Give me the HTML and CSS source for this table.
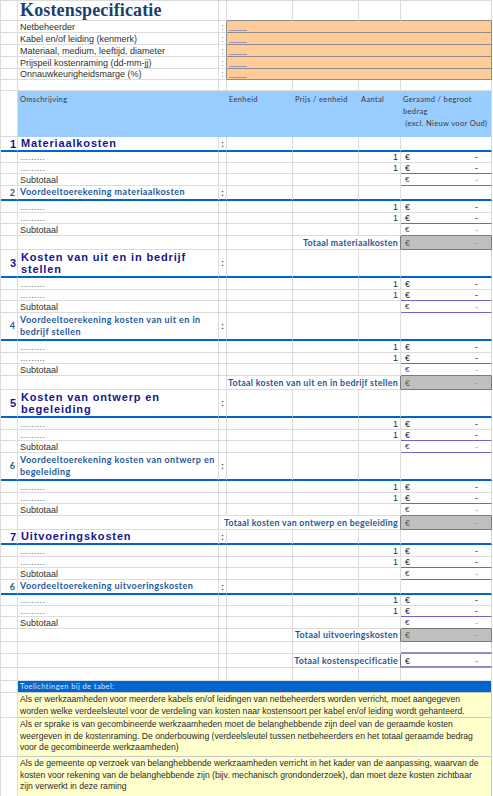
FILE: index.html
```html
<!DOCTYPE html>
<html lang="nl">
<head>
  <meta charset="UTF-8">
  <meta name="viewport" content="width=device-width, initial-scale=1.0">
  <title>Kostenspecificatie</title>
  <link rel="stylesheet" href="styles.css">
</head>
<body>
  <table class="sheet">
    <colgroup>
      <col class="col-a"><col class="col-b"><col class="col-c"><col class="col-d"><col class="col-e"><col class="col-f"><col class="col-g">
    </colgroup>

    <!-- kop + invoervelden -->
    <tr class="h21">
      <td></td><td class="sheet-title">Kostenspecificatie</td><td></td>
      <td class="above-field"></td><td class="above-field"></td><td class="above-field"></td><td class="above-field"></td>
    </tr>
    <tr class="h12"><td></td><td class="label">Netbeheerder</td><td class="colon field-edge">:</td><td class="field" colspan="4"><span class="field-line"></span></td></tr>
    <tr class="h12"><td></td><td class="label">Kabel en/of leiding (kenmerk)</td><td class="colon field-edge">:</td><td class="field" colspan="4"><span class="field-line"></span></td></tr>
    <tr class="h12"><td></td><td class="label">Materiaal, medium, leeftijd, diameter</td><td class="colon field-edge">:</td><td class="field" colspan="4"><span class="field-line"></span></td></tr>
    <tr class="h12"><td></td><td class="label">Prijspeil kostenraming (dd-mm-jj)</td><td class="colon field-edge">:</td><td class="field" colspan="4"><span class="field-line"></span></td></tr>
    <tr class="h11"><td></td><td class="label">Onnauwkeurigheidsmarge (%)</td><td class="colon field-edge">:</td><td class="field" colspan="4"><span class="field-line"></span></td></tr>
    <tr class="h11"><td></td><td></td><td></td><td></td><td></td><td></td><td></td></tr>

    <!-- kolomkoppen -->
    <tr class="head">
      <td class="plain"></td>
      <td colspan="2">Omschrijving</td>
      <td>Eenheid</td>
      <td>Prijs / eenheid</td>
      <td>Aantal</td>
      <td class="last">Geraamd / begroot<br>bedrag<br>&nbsp;(excl. Nieuw voor Oud)</td>
    </tr>

    <!-- 1 -->
    <tr class="section h15"><td class="num">1</td><td class="sec-title">Materiaalkosten</td><td class="colon-b">:</td><td></td><td></td><td></td><td></td></tr>
    <tr class="h11"><td></td><td class="dots">.........</td><td></td><td></td><td></td><td class="qty">1</td><td class="amount"><span>€</span><span class="dash">-</span></td></tr>
    <tr class="h11"><td></td><td class="dots">.........</td><td></td><td></td><td></td><td class="qty">1</td><td class="amount line-under"><span>€</span><span class="dash">-</span></td></tr>
    <tr class="h12"><td></td><td class="label">Subtotaal</td><td></td><td></td><td></td><td></td><td class="amount subtotal line-under"><span>€</span><span class="dash">-</span></td></tr>

    <!-- 2 -->
    <tr class="section h15"><td class="num-sub">2</td><td class="sub-title">Voordeeltoerekening materiaalkosten</td><td class="colon-b">:</td><td></td><td></td><td></td><td></td></tr>
    <tr class="h12"><td></td><td class="dots">.........</td><td></td><td></td><td></td><td class="qty">1</td><td class="amount"><span>€</span><span class="dash">-</span></td></tr>
    <tr class="h11"><td></td><td class="dots">.........</td><td></td><td></td><td></td><td class="qty">1</td><td class="amount line-under"><span>€</span><span class="dash">-</span></td></tr>
    <tr class="h12"><td></td><td class="label">Subtotaal</td><td></td><td></td><td></td><td></td><td class="amount subtotal box-under"><span>€</span><span class="dash">-</span></td></tr>
    <tr class="h14"><td></td><td></td><td></td><td></td><td class="total-label" colspan="2">Totaal materiaalkosten</td><td class="amount total"><span>€</span><span class="dash">-</span></td></tr>

    <!-- 3 -->
    <tr class="section h28"><td class="num">3</td><td class="sec-title">Kosten van uit en in bedrijf<br>stellen</td><td class="colon-b">:</td><td></td><td></td><td></td><td></td></tr>
    <tr class="h12"><td></td><td class="dots">.........</td><td></td><td></td><td></td><td class="qty">1</td><td class="amount"><span>€</span><span class="dash">-</span></td></tr>
    <tr class="h11"><td></td><td class="dots">.........</td><td></td><td></td><td></td><td class="qty">1</td><td class="amount line-under"><span>€</span><span class="dash">-</span></td></tr>
    <tr class="h12"><td></td><td class="label">Subtotaal</td><td></td><td></td><td></td><td></td><td class="amount subtotal line-under"><span>€</span><span class="dash">-</span></td></tr>

    <!-- 4 -->
    <tr class="section h28"><td class="num-sub">4</td><td class="sub-title">Voordeeltoerekening kosten van uit en in<br>bedrijf stellen</td><td class="colon-b">:</td><td></td><td></td><td></td><td></td></tr>
    <tr class="h12"><td></td><td class="dots">.........</td><td></td><td></td><td></td><td class="qty">1</td><td class="amount"><span>€</span><span class="dash">-</span></td></tr>
    <tr class="h11"><td></td><td class="dots">.........</td><td></td><td></td><td></td><td class="qty">1</td><td class="amount line-under"><span>€</span><span class="dash">-</span></td></tr>
    <tr class="h12"><td></td><td class="label">Subtotaal</td><td></td><td></td><td></td><td></td><td class="amount subtotal box-under"><span>€</span><span class="dash">-</span></td></tr>
    <tr class="h14"><td></td><td></td><td></td><td class="total-label" colspan="3">Totaal kosten van uit en in bedrijf stellen</td><td class="amount total"><span>€</span><span class="dash">-</span></td></tr>

    <!-- 5 -->
    <tr class="section h28"><td class="num">5</td><td class="sec-title">Kosten van ontwerp en<br>begeleiding</td><td class="colon-b">:</td><td></td><td></td><td></td><td></td></tr>
    <tr class="h12"><td></td><td class="dots">.........</td><td></td><td></td><td></td><td class="qty">1</td><td class="amount"><span>€</span><span class="dash">-</span></td></tr>
    <tr class="h11"><td></td><td class="dots">.........</td><td></td><td></td><td></td><td class="qty">1</td><td class="amount line-under"><span>€</span><span class="dash">-</span></td></tr>
    <tr class="h12"><td></td><td class="label">Subtotaal</td><td></td><td></td><td></td><td></td><td class="amount subtotal line-under"><span>€</span><span class="dash">-</span></td></tr>

    <!-- 6 -->
    <tr class="section h28"><td class="num-sub">6</td><td class="sub-title">Voordeeltoerekening kosten van ontwerp en<br>begeleiding</td><td class="colon-b">:</td><td></td><td></td><td></td><td></td></tr>
    <tr class="h12"><td></td><td class="dots">.........</td><td></td><td></td><td></td><td class="qty">1</td><td class="amount"><span>€</span><span class="dash">-</span></td></tr>
    <tr class="h11"><td></td><td class="dots">.........</td><td></td><td></td><td></td><td class="qty">1</td><td class="amount line-under"><span>€</span><span class="dash">-</span></td></tr>
    <tr class="h12"><td></td><td class="label">Subtotaal</td><td></td><td></td><td></td><td></td><td class="amount subtotal box-under"><span>€</span><span class="dash">-</span></td></tr>
    <tr class="h14"><td></td><td></td><td class="total-label" colspan="4">Totaal kosten van ontwerp en begeleiding</td><td class="amount total"><span>€</span><span class="dash">-</span></td></tr>

    <!-- 7 -->
    <tr class="section h15"><td class="num">7</td><td class="sec-title">Uitvoeringskosten</td><td class="colon-b">:</td><td></td><td></td><td></td><td></td></tr>
    <tr class="h12"><td></td><td class="dots">.........</td><td></td><td></td><td></td><td class="qty">1</td><td class="amount"><span>€</span><span class="dash">-</span></td></tr>
    <tr class="h11"><td></td><td class="dots">.........</td><td></td><td></td><td></td><td class="qty">1</td><td class="amount line-under"><span>€</span><span class="dash">-</span></td></tr>
    <tr class="h12"><td></td><td class="label">Subtotaal</td><td></td><td></td><td></td><td></td><td class="amount subtotal line-under"><span>€</span><span class="dash">-</span></td></tr>

    <!-- 6 (uitvoering) -->
    <tr class="section h15"><td class="num-sub">6</td><td class="sub-title">Voordeeltoerekening uitvoeringskosten</td><td class="colon-b">:</td><td></td><td></td><td></td><td></td></tr>
    <tr class="h11"><td></td><td class="dots">.........</td><td></td><td></td><td></td><td class="qty">1</td><td class="amount"><span>€</span><span class="dash">-</span></td></tr>
    <tr class="h11"><td></td><td class="dots">.........</td><td></td><td></td><td></td><td class="qty">1</td><td class="amount line-under"><span>€</span><span class="dash">-</span></td></tr>
    <tr class="h12"><td></td><td class="label">Subtotaal</td><td></td><td></td><td></td><td></td><td class="amount subtotal box-under"><span>€</span><span class="dash">-</span></td></tr>
    <tr class="h13"><td></td><td></td><td></td><td></td><td class="total-label" colspan="2">Totaal uitvoeringskosten</td><td class="amount total"><span>€</span><span class="dash">-</span></td></tr>
    <tr class="h12"><td></td><td></td><td></td><td></td><td></td><td></td><td class="grand-line"></td></tr>
    <tr class="h14"><td></td><td></td><td></td><td></td><td class="total-label" colspan="2">Totaal kostenspecificatie</td><td class="amount grand grand-line"><span>€</span><span class="dash">-</span></td></tr>
    <tr class="h13"><td></td><td></td><td></td><td></td><td></td><td></td><td></td></tr>

    <!-- toelichting -->
    <tr class="h12"><td></td><td class="notes-head" colspan="6">Toelichtingen bij de tabel:</td></tr>
    <tr class="h24"><td></td><td class="note" colspan="6">Als er werkzaamheden voor meerdere kabels en/of leidingen van netbeheerders worden verricht, moet aangegeven<br>worden welke verdeelsleutel voor de verdeling van kosten naar kostensoort per kabel en/of leiding wordt gehanteerd.</td></tr>
    <tr class="h39"><td></td><td class="note" colspan="6">Als er sprake is van gecombineerde werkzaamheden moet de belanghebbende zijn deel van de geraamde kosten<br>weergeven in de kostenraming. De onderbouwing (verdeelsleutel tussen netbeheerders en het totaal geraamde bedrag<br>voor de gecombineerde werkzaamheden)</td></tr>
    <tr class="h40"><td></td><td class="note" colspan="6">Als de gemeente op verzoek van belanghebbende werkzaamheden verricht in het kader van de aanpassing, waarvan de<br>kosten voor rekening van de belanghebbende zijn (bijv. mechanisch grondonderzoek), dan moet deze kosten zichtbaar<br>zijn verwerkt in deze raming</td></tr>
  </table>
</body>
</html>
```

FILE: styles.css
```css
:root {
  --grid: #dcdcdc;
  --field-border: #8c8c8c;
  --field-bg: #ffcc99;
  --head-bg: #99ccff;
  --rule-blue: #0066cc;
  --navy: #15168c;
  --steel: #24589a;
  --purple: #6a6ac4;
  --box: #7a7a7a;
  --text: #333;
}

body {
  margin: 0;
  background-color: white;
  font-family: 'Liberation Sans', Arial, sans-serif;
  color: var(--text);
}

.sheet {
  border-collapse: separate;
  border-spacing: 0;
  table-layout: fixed;
  width: 491px;
  border-left: 1px solid var(--grid);
  border-top: 1px solid var(--grid);
}

.col-a { width: 17px; }
.col-b { width: 201px; }
.col-c { width: 8px; }
.col-d { width: 66px; }
.col-e { width: 66px; }
.col-f { width: 42px; }
.col-g { width: 91px; }

td {
  border-right: 1px solid var(--grid);
  border-bottom: 1px solid var(--grid);
  padding: 0 2px;
  font-size: 9px;
  line-height: 10px;
  vertical-align: bottom;
  white-space: nowrap;
  overflow: hidden;
}

.h11 { height: 11px; }
.h12 { height: 12px; }
.h13 { height: 13px; }
.h14 { height: 14px; }
.h15 { height: 15px; }
.h21 { height: 20px; }
.h24 { height: 24px; }
.h28 { height: 28px; }
.h39 { height: 39px; }
.h40 { height: 40px; }

/* titel en invoer */

.sheet-title {
  font-family: 'Liberation Serif', 'Times New Roman', serif;
  font-weight: bold;
  font-size: 18px;
  line-height: 19px;
  letter-spacing: 0.15px;
  color: #1b3f6e;
  vertical-align: middle;
}

.above-field {
  border-bottom-color: var(--field-border);
}

.field-edge {
  border-right-color: var(--field-border);
}

.field {
  background-color: var(--field-bg);
  border-right-color: var(--field-border);
  border-bottom-color: var(--field-border);
}

.field-line {
  display: block;
  width: 18px;
  height: 1px;
  margin-bottom: 1px;
  background-color: #a690b0;
}

.label {
  color: #2f2f2f;
}

td.colon {
  padding: 0;
  text-align: center;
  color: #888;
}

/* kolomkoppen */

.head {
  height: 46px;
}

.head td {
  background-color: var(--head-bg);
  border-right-color: var(--head-bg);
  border-bottom-color: var(--head-bg);
  font-family: Lato, 'Open Sans', sans-serif;
  font-size: 7.5px;
  letter-spacing: 0.35px;
  line-height: 12px;
  vertical-align: top;
  padding-top: 3px;
  color: #3a3a3a;
}

.head td.plain {
  background-color: white;
  border-right-color: var(--grid);
  border-bottom-color: var(--grid);
}

.head td.last {
  border-right-color: var(--grid);
}

/* secties */

.section td {
  border-bottom: 2px solid var(--rule-blue);
  vertical-align: middle;
}

td.num {
  padding: 0 1px 0 0;
  text-align: right;
  font-weight: bold;
  font-size: 11px;
  color: var(--navy);
}

td.num-sub {
  padding: 0 2px 0 0;
  text-align: right;
  font-family: Lato, 'Open Sans', sans-serif;
  font-weight: bold;
  font-size: 9px;
  color: var(--steel);
}

td.sec-title {
  font-weight: bold;
  font-size: 11px;
  line-height: 12.5px;
  letter-spacing: 0.85px;
  color: var(--navy);
  padding-left: 3px;
}

td.sub-title {
  font-family: Lato, 'Open Sans', sans-serif;
  font-weight: bold;
  font-size: 9px;
  line-height: 12.5px;
  letter-spacing: 0.42px;
  color: var(--steel);
  padding-left: 2px;
}

td.colon-b {
  padding: 0;
  text-align: center;
  font-weight: bold;
  color: #444;
}

/* regels */

.dots {
  color: #666;
  letter-spacing: 0.3px;
}

.qty {
  text-align: right;
}

td.amount {
  padding: 0 13px 0 4px;
  color: #222;
}

.dash {
  float: right;
}

td.subtotal {
  font-size: 8px;
  color: #444;
}

.subtotal .dash {
  color: #888;
}

td.line-under {
  border-bottom-color: var(--purple);
}

td.box-under {
  border-bottom-color: var(--box);
}

td.total-label {
  padding: 0 2px 0 0;
  text-align: right;
  vertical-align: middle;
  border-right-color: var(--box);
  font-family: Lato, 'Open Sans', sans-serif;
  font-weight: bold;
  font-size: 8.8px;
  letter-spacing: 0.3px;
  color: var(--steel);
}

td.total {
  background-color: #c0c0c0;
  border-right-color: var(--box);
  border-bottom-color: var(--box);
  vertical-align: middle;
}

.total span:first-child {
  color: #6e5a34;
}

.total .dash {
  color: #8a8a8a;
}

td.grand-line {
  border-bottom: 2px solid #8c8cd0;
}

.grand .dash {
  color: #777;
}

/* toelichting */

td.notes-head {
  background-color: var(--rule-blue);
  border-bottom-color: #c8c8c8;
  color: #d6e6ff;
  font-family: Lato, 'Open Sans', sans-serif;
  font-size: 7.5px;
  letter-spacing: 0.4px;
  vertical-align: middle;
}

td.note {
  background-color: #ffffcc;
  border-bottom-color: #c8c8c8;
  border-right-color: #c8c8c8;
  font-size: 8.6px;
  line-height: 11.5px;
  vertical-align: top;
  padding-top: 1px;
  color: #2a2a2a;
}
```
